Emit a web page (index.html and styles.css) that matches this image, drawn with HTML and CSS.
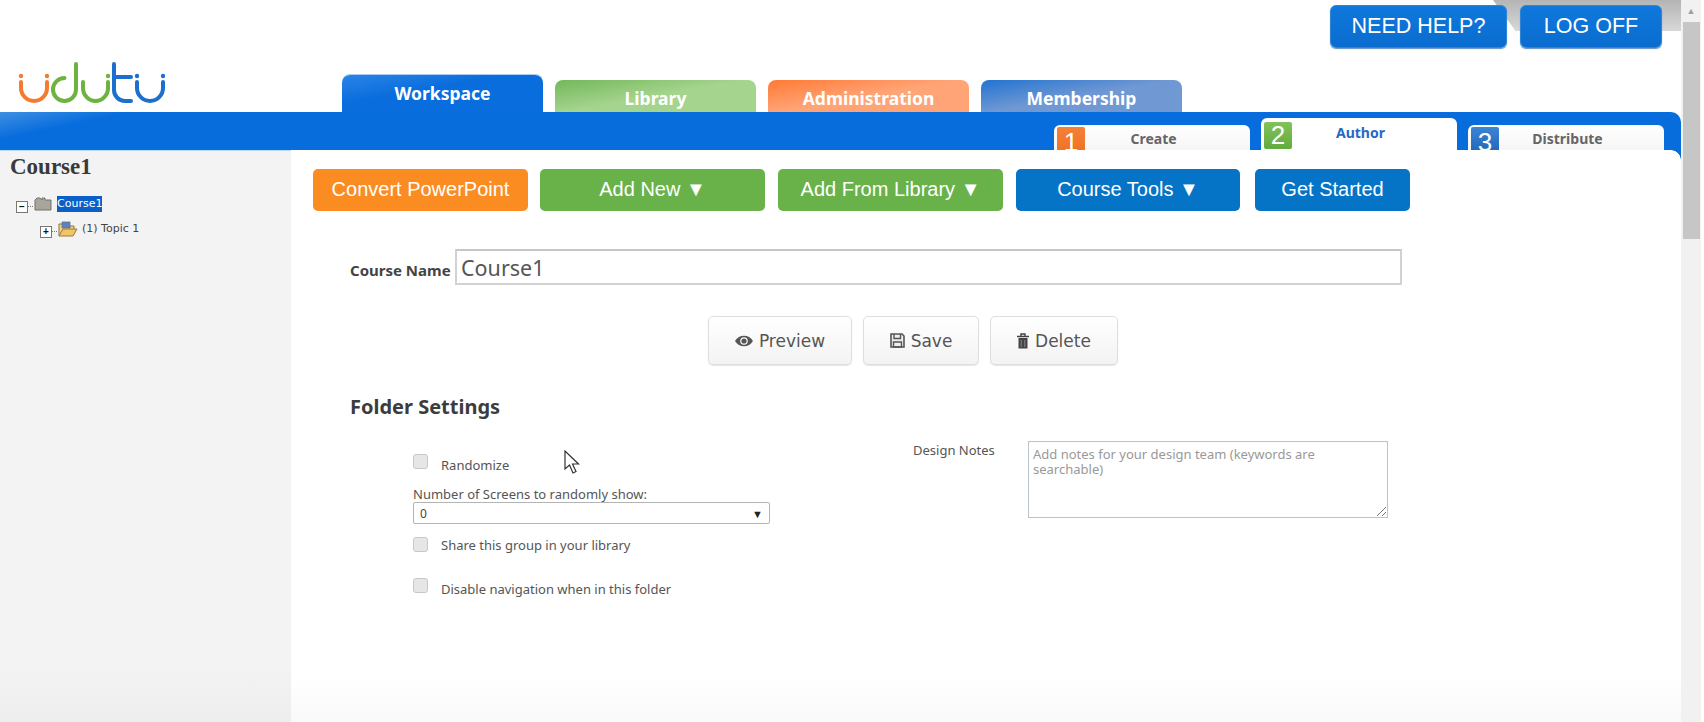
FILE: index.html
```html
<!DOCTYPE html>
<html lang="en">
<head>
<meta charset="utf-8">
<title>Udutu</title>
<link rel="stylesheet" href="styles.css">
</head>
<body>
<div class="page">
  <div class="main">
    <header class="top">
      <div class="top-shade"></div>
      <div class="top-actions">
        <a class="top-btn help">NEED HELP?</a>
        <a class="top-btn logoff">LOG OFF</a>
      </div>
      <div class="brand-row">
        <svg class="logo" viewBox="0 0 150 44" width="150" height="44" fill="none" stroke-width="4" stroke-linecap="round">
          <path d="M3 20 V26 A13 13 0 0 0 29 26 V20" stroke="#f47b30"/>
          <circle cx="3" cy="14" r="2.200" fill="#f47b30"/>
          <circle cx="29" cy="14" r="2.200" fill="#f47b30"/>
          <path d="M58 2 V27.500 A11.500 11.500 0 1 1 46.500 16" stroke="#6cb33f"/>
          <path d="M65 20 V26 A12.500 13 0 0 0 90 26 V20" stroke="#6cb33f"/>
          <circle cx="90" cy="14" r="2.200" fill="#6cb33f"/>
          <path d="M96 2 V28 A11 11 0 0 0 107 39 H113" stroke="#1d6fce"/>
          <path d="M96 15 H113" stroke="#1d6fce"/>
          <path d="M119 20 V26 A13 13 0 0 0 145 26 V20" stroke="#1d6fce"/>
          <circle cx="119" cy="14" r="2.200" fill="#1d6fce"/>
          <circle cx="145" cy="14" r="2.200" fill="#1d6fce"/>
        </svg>
        <nav class="tabs">
          <a class="tab tab-work">Workspace</a>
          <a class="tab tab-lib">Library</a>
          <a class="tab tab-admin">Administration</a>
          <a class="tab tab-mem">Membership</a>
        </nav>
      </div>
      <div class="bar">
        <div class="step step-1"><span class="num">1</span><span class="step-label">Create</span></div>
        <div class="step step-2"><span class="num">2</span><span class="step-label">Author</span></div>
        <div class="step step-3"><span class="num">3</span><span class="step-label">Distribute</span></div>
      </div>
    </header>
    <div class="body">
      <aside class="side">
        <h1 class="side-title">Course1</h1>
        <div class="tree-row root">
          <span class="exp">&#8722;</span><span class="dots"></span>
          <svg class="fold" viewBox="0 0 18 14" width="18" height="14"><path d="M1 13 V3 L3 1 H6 L8 3 V1 H11 V3 H17 V13 Z" fill="#a9a49c" stroke="#77726a" stroke-width="1"/></svg>
          <span class="sel">Course1</span>
        </div>
        <div class="tree-row child">
          <span class="exp">+</span><span class="dots"></span>
          <svg class="fold-open" viewBox="0 0 20 17" width="20" height="17"><path d="M1 15 V3 H7 L9 5 H16 V8" fill="#f1d58c" stroke="#8a7440" stroke-width="1"/><rect x="4" y="1" width="8" height="6" fill="#5b82c8" stroke="#6a6a6a" stroke-width=".7"/><path d="M1 15 L5 8 H19 L15 15 Z" fill="#f3c468" stroke="#9a7c3c" stroke-width="1"/></svg>
          <span class="tree-text">(1) Topic 1</span>
        </div>
      </aside>
      <main class="content">
        <div class="toolbar">
          <a class="act act-orange w-convert">Convert PowerPoint</a>
          <a class="act act-green w-new">Add New ▼</a>
          <a class="act act-green w-from">Add From Library ▼</a>
          <a class="act act-blue w-tools">Course Tools ▼</a>
          <a class="act act-blue w-start">Get Started</a>
        </div>
        <div class="name-row">
          <label class="name-label">Course Name</label>
          <div class="name-input">Course1</div>
        </div>
        <div class="crud">
          <a class="crud-btn w-preview">
            <svg viewBox="0 0 18 12" width="18" height="12"><path d="M0 6 C4 -1 14 -1 18 6 C14 13 4 13 0 6 Z" fill="#555"/><circle cx="9" cy="6" r="3.800" fill="#fff"/><circle cx="9" cy="6" r="2.600" fill="#555"/></svg>Preview</a>
          <a class="crud-btn w-save">
            <svg viewBox="0 0 15 15" width="15" height="15"><path d="M1 1 H12 L14 3 V14 H1 Z" fill="#eee" stroke="#555" stroke-width="1.600"/><path d="M4 1 V5.500 H10.500 V1 M3.500 9 H11.500 V14 H3.500 Z" fill="none" stroke="#555" stroke-width="1.400"/></svg>Save</a>
          <a class="crud-btn w-delete">
            <svg viewBox="0 0 12 16" width="12" height="16"><path d="M0 3.500 H12 M4 3 V1 H8 V3" fill="none" stroke="#444" stroke-width="1.400"/><path d="M1.500 5 H10.500 V15.500 H1.500 Z" fill="#444"/><path d="M4.200 7 V14 M7.800 7 V14" stroke="#999" stroke-width=".8"/></svg>Delete</a>
        </div>
        <h2 class="section">Folder Settings</h2>
        <div class="settings">
          <div class="col-left">
            <div class="check-row first"><span class="box"></span><span class="check-text">Randomize</span></div>
            <div class="count-label">Number of Screens to randomly show:</div>
            <div class="select"><span>0</span><span class="caret">▼</span></div>
            <div class="check-row share"><span class="box"></span><span class="share-text">Share this group in your library</span></div>
            <div class="check-row disable"><span class="box"></span><span class="check-text">Disable navigation when in this folder</span></div>
          </div>
          <div class="col-right">
            <div class="notes-label">Design Notes</div>
            <div class="notes">Add notes for your design team (keywords are searchable)
              <svg class="grip" viewBox="0 0 10 10" width="10" height="10"><path d="M1 10 L10 1 M6 10 L10 6" stroke="#777" stroke-width="1"/></svg>
            </div>
          </div>
        </div>
      </main>
    </div>
    <svg class="cursor" viewBox="0 0 17 25" width="17" height="25"><path d="M1 1 V19 L5.500 15 L9 23 L12 21.500 L8.500 14 H14.500 Z" fill="#fff" stroke="#333" stroke-width="1.200"/></svg>
  </div>
  <div class="scrollbar">
    <span class="arrow">▲</span>
    <span class="thumb"></span>
  </div>
</div>
</body>
</html>
```

FILE: styles.css
```css
* { box-sizing: border-box; }
html, body { margin: 0; height: 100%; overflow: hidden; background: #fff; }
body { font-family: "Open Sans", "Liberation Sans", sans-serif; color: #444; }
.page { display: flex; width: 1704px; height: 722px; }
.main { position: relative; width: 1681px; height: 722px; display: flex; flex-direction: column; }

/* header */
.top { position: relative; height: 150px; flex: none; }
.top-shade { position: absolute; right: 0; top: 0; width: 188px; height: 31px; background: linear-gradient(#b4b4b4, #d8d8d8); clip-path: polygon(0 0, 100% 0, 100% 100%, 12% 100%); }
.top-actions { position: relative; height: 75px; display: flex; justify-content: flex-end; gap: 13px; padding: 5px 19px 0 0; }
.top-btn { height: 43px; border-radius: 6px; background: linear-gradient(#0f78dc, #0a6ccf); border: 1px solid #2f86d8; box-shadow: 0 1px 1px #5f93c8; color: #fff; font: 21.500px/41px "Liberation Sans", sans-serif; text-align: center; }
.help { width: 177px; }
.logoff { width: 142px; }
.brand-row { height: 37px; display: flex; align-items: flex-end; position: relative; }
.logo { position: absolute; left: 18px; top: -13px; }
.tabs { margin-left: 342px; display: flex; align-items: flex-end; gap: 12px; }
.tab { width: 201px; height: 32px; border-radius: 8px 8px 0 0; color: #fff; font: 700 17.500px/36px "Noto Sans", sans-serif; text-align: center; }
.tab-work { height: 37px; background: linear-gradient(170deg, #2a84e6, #0a6ddd 40%); line-height: 37px; box-shadow: 0 -1px 0 #a8cdf2; }
.tab-lib { background: linear-gradient(170deg, #72b85a, #a5d48e 50%); }
.tab-admin { background: linear-gradient(170deg, #ff7a35, #ffa476 50%); }
.tab-mem { background: linear-gradient(170deg, #2273d2, #7098d2 50%); }
.bar { height: 38px; border-radius: 0 10px 0 0; display: flex; justify-content: flex-end; align-items: flex-end; gap: 11px; padding-right: 17px; background: linear-gradient(168deg, #3f8fe2, #076ddd 7%); position: relative; }
.bar::after { content: ""; position: absolute; right: 0; top: 100%; width: 10px; height: 10px; background: radial-gradient(circle at 0 100%, transparent 9.500px, #076ddd 10px); }
.step { width: 196px; height: 25px; background: linear-gradient(#fff, #f6f6f6); border-radius: 6px 6px 0 0; display: flex; overflow: hidden; padding: 2px 0 0 3px; }
.step-2 { height: 32px; background: #fff; padding-top: 4px; }
.num { width: 28px; height: 30px; flex: none; color: #fff; font: 26px/30px "Liberation Sans", sans-serif; text-align: center; border-radius: 2px; }
.step-1 .num { background: linear-gradient(#f4803a, #ee6f1e); }
.step-2 .num { height: 27px; line-height: 27px; background: linear-gradient(#83c25a, #62ab3e); }
.step-3 .num { background: linear-gradient(#3c84d4, #1c62b4); }
.step-label { flex: 1; text-align: center; font: 700 14px/20px "Noto Sans", sans-serif; color: #666; padding: 2px 28px 0 0; }
.step-2 .step-label { color: #2768c6; line-height: 18px; padding-top: 2px; }

/* body */
.body { flex: 1; display: flex; min-height: 0; }
.side { width: 291px; flex: none; background: linear-gradient(#f4f3f3 90%, #eeeeee); border-top: 1px solid #bcd8f5; padding: 3px 0 0 10px; }
.side-title { margin: 0; font: 700 23px/26px "Liberation Serif", serif; color: #3a3a3a; }
.tree-row { display: flex; align-items: center; font: 11px/14px "DejaVu Sans", sans-serif; color: #444; }
.root { margin: 15px 0 0 6px; }
.child { margin: 7px 0 0 30px; }
.exp { width: 12px; height: 12px; margin-top: 6px; border: 1px solid #777; background: #fff; color: #111; font: 700 10px/10px "Liberation Sans", sans-serif; text-align: center; }
.dots { width: 5px; border-top: 1px dotted #777; margin-top: 4px; }
.fold { margin: 0 5px 0 1px; }
.fold-open { margin: 0 4px 0 1px; }
.sel { background: #0a60c8; color: #fff; padding: 1px 0; }

.content { flex: 1; padding: 19px 0 0 22px; min-width: 0; background: linear-gradient(#fff 92%, #f9f9f9); }
.toolbar { display: flex; gap: 12px; height: 42px; }
.act { height: 42px; border-radius: 5px; color: #fff; font: 20px/41px "Liberation Sans", sans-serif; text-align: center; }
.act-orange { background: #fb8c21; }
.act-green { background: #69b24a; }
.act-blue { background: #0573c6; }
.w-convert { width: 215px; }
.w-new { width: 225px; }
.w-from { width: 225px; margin-left: 1px; }
.w-tools { width: 224px; margin-left: 1px; }
.w-start { width: 155px; margin-left: 3px; }

.name-row { display: flex; align-items: center; margin: 38px 0 0 37px; height: 36px; }
.name-label { width: 105px; font: 700 15px/20px "Noto Sans", sans-serif; color: #444; margin-top: 6px; }
.name-input { width: 947px; height: 36px; border: 2px solid #d2d2d2; border-top-color: #c6c6c6; color: #555; font: 21.500px/33px "Noto Sans", sans-serif; padding-left: 4px; }

.crud { display: flex; gap: 11px; margin: 31px 0 0 395px; height: 49px; }
.crud-btn { display: flex; align-items: center; justify-content: center; gap: 6px; height: 49px; border: 1px solid #dedede; border-radius: 5px; background: linear-gradient(#fff, #f3f3f3); color: #555; font: 17px/24px "DejaVu Sans", sans-serif; box-shadow: 0 1px 1px #e6e6e6; }
.w-preview { width: 144px; }
.w-save { width: 116px; }
.w-delete { width: 128px; }

.section { margin: 28px 0 0 37px; font: 700 20px/28px "Noto Sans", sans-serif; color: #3c3c3c; }

.settings { display: flex; margin: 33px 0 0 100px; }
.col-left { width: 500px; font: 13px/16px "Noto Sans", sans-serif; color: #555; }
.check-row { display: flex; align-items: flex-start; }
.box { width: 15px; height: 15px; flex: none; border: 1px solid #c8c8c8; border-radius: 3px; background: #e6e6e6; margin-right: 13px; }
.check-text { margin-top: 3px; }
.share-text { margin-top: 0; }
.first { height: 32px; }
.count-label { margin-top: 0; height: 16px; }
.select { width: 357px; height: 22px; border: 1px solid #b4b4b4; border-radius: 2px; display: flex; justify-content: space-between; padding: 3px 6px 0 6px; font-size: 12px; color: #444; }
.caret { font-size: 11px; color: #222; }
.share { margin-top: 13px; height: 30px; }
.disable { margin-top: 11px; }
.col-right { display: flex; gap: 0; margin-top: -13px; }
.notes-label { width: 115px; padding-top: 1px; font: 13px/16px "Noto Sans", sans-serif; color: #555; }
.notes { position: relative; width: 360px; height: 77px; border: 1.500px solid #b9c4cc; color: #999; font: 13px/15px "Noto Sans", sans-serif; padding: 5px 4px; }
.grip { position: absolute; right: 1px; bottom: 1px; }

.cursor { position: absolute; left: 564px; top: 450px; }

/* scrollbar */
.scrollbar { width: 20px; flex: none; background: #f1f1f1; display: flex; flex-direction: column; align-items: center; }
.arrow { height: 22px; font: 9px/22px "Liberation Sans", sans-serif; color: #a0a0a0; }
.thumb { width: 17px; height: 217px; background: #c6c6c6; }
```
